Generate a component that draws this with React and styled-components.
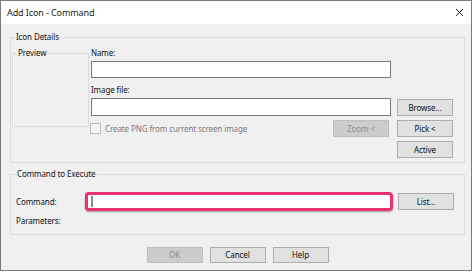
import React from "react";
import styled, { createGlobalStyle } from "styled-components";

const GlobalStyle = createGlobalStyle`
  html, body {
    margin: 0;
    padding: 0;
    background: #ffffff;
  }
  body {
    font-family: "Noto Sans", "Open Sans", sans-serif;
    font-size: 8px;
    letter-spacing: -0.1px;
    color: #000;
  }
`;

export default function App() {
  return (
    <>
      <GlobalStyle />
      <Window>
        <TitleBar>
          <Title>Add Icon - Command</Title>
          <CloseIcon viewBox="0 0 10 10" aria-label="Close">
            <path d="M1 1 L9 9 M9 1 L1 9" />
          </CloseIcon>
        </TitleBar>
        <Body>
          <IconDetails>
            <Legend>Icon Details</Legend>
            <DetailsGrid>
              <Preview>
                <Legend $inset={4}>Preview</Legend>
              </Preview>
              <Label $row={1} $col={2}>Name:</Label>
              <TextBox $row={2} />
              <Label $row={3} $col={2} $end>
                Image file:
              </Label>
              <TextBox $row={4} $tall />
              <Button $row={4} $col={3}>
                Browse...
              </Button>
              <CheckRow>
                <CheckLabel>
                  <CheckBox />
                  Create PNG from current screen image
                </CheckLabel>
                <Button disabled>Zoom &lt;</Button>
              </CheckRow>
              <Button $row={5} $col={3}>
                Pick &lt;
              </Button>
              <Button $row={6} $col={3}>
                Active
              </Button>
            </DetailsGrid>
          </IconDetails>

          <CommandBox>
            <Legend $inset={0}>Command to Execute</Legend>
            <CommandGrid>
              <Label>Command:</Label>
              <HighlightField>
                <Caret />
              </HighlightField>
              <Button>List...</Button>
              <Label>Parameters:</Label>
            </CommandGrid>
          </CommandBox>

          <Footer>
            <Button disabled>OK</Button>
            <Button>Cancel</Button>
            <Button>Help</Button>
          </Footer>
        </Body>
      </Window>
    </>
  );
}

const Window = styled.div`
  width: 470px;
  height: 269px;
  border: 1px solid #7c7c7c;
  background: #f0f0f0;
  display: flex;
  flex-direction: column;
`;

const TitleBar = styled.div`
  height: 23px;
  background: #ffffff;
  display: flex;
  align-items: center;
  justify-content: space-between;
  padding: 0 7px 0 6px;
`;

const Title = styled.span`
  font-size: 9px;
  color: #1a1a1a;
`;

const CloseIcon = styled.svg`
  width: 9px;
  height: 9px;
  fill: none;
  stroke: #222;
  stroke-width: 1.1;
`;

const Body = styled.div`
  flex: 1;
  padding: 6px 6px 0 9px;
  display: flex;
  flex-direction: column;
`;

const Fieldset = styled.fieldset`
  margin: 0;
  border: 1px solid #dcdcdc;
  min-width: 0;
`;

const Legend = styled.legend`
  margin-left: ${(p) => p.$inset ?? 3}px;
  padding: 0 1px;
  line-height: 14px;
  font-size: 8px;
  color: #111;
`;

const IconDetails = styled(Fieldset)`
  padding: 0 9px 4px 1px;
`;

const DetailsGrid = styled.div`
  display: grid;
  grid-template-columns: 79px 306px 57px;
  grid-template-rows: 17px 17px 20px 18px 21px 21px;
`;

const Preview = styled(Fieldset)`
  grid-row: 1 / span 6;
  grid-column: 1;
  align-self: start;
  width: 77px;
  height: 81px;
  box-sizing: border-box;
  margin-top: 2px;
  padding: 0;
`;

const Label = styled.span`
  grid-row: ${(p) => p.$row ?? "auto"};
  grid-column: ${(p) => p.$col ?? "auto"};
  align-self: ${(p) => (p.$end ? "end" : "center")};
  margin-bottom: ${(p) => (p.$end ? 1 : 0)}px;
  line-height: 14px;
  color: #111;
`;

const TextBox = styled.div`
  grid-row: ${(p) => p.$row};
  grid-column: 2;
  align-self: start;
  width: 300px;
  height: ${(p) => (p.$tall ? 18 : 17)}px;
  box-sizing: border-box;
  background: #ffffff;
  border: 1px solid #7a7a7a;
`;

const Button = styled.button`
  grid-row: ${(p) => p.$row ?? "auto"};
  grid-column: ${(p) => p.$col ?? "auto"};
  align-self: ${(p) => (p.$row ? "end" : "center")};
  width: 56px;
  height: 17px;
  box-sizing: border-box;
  padding: 0;
  margin: 0;
  font-family: inherit;
  font-size: 8px;
  letter-spacing: -0.1px;
  line-height: 15px;
  color: #111;
  background: #e1e1e1;
  border: 1px solid #adadad;
  border-radius: 0;

  &:disabled {
    background: #cccccc;
    border-color: #bfbfbf;
    color: #8d8d8d;
  }
`;

const CheckRow = styled.div`
  grid-row: 5;
  grid-column: 2;
  align-self: end;
  width: 298px;
  display: flex;
  align-items: center;
  justify-content: space-between;
`;

const CheckLabel = styled.label`
  display: flex;
  align-items: center;
  gap: 4px;
  color: #7a7a7a;
  line-height: 14px;
`;

const CheckBox = styled.span`
  width: 11px;
  height: 11px;
  box-sizing: border-box;
  border: 1px solid #bcbcbc;
  background: #f4f4f4;
  margin-left: -1px;
`;

const CommandBox = styled(Fieldset)`
  margin-top: 4px;
  padding: 11px 10px 6px 5px;
`;

const CommandGrid = styled.div`
  display: grid;
  grid-template-columns: 69px 313px 56px;
  grid-template-rows: 19px 14px;
  row-gap: 3px;
`;

const HighlightField = styled.div`
  width: 308px;
  height: 19px;
  box-sizing: border-box;
  background: #ffffff;
  border: 3px solid #e8336d;
  border-radius: 4px;
  box-shadow: 0 1px 2px rgba(0, 0, 0, 0.35);
  display: flex;
  align-items: center;
  padding-left: 3px;
`;

const Caret = styled.span`
  width: 2px;
  height: 11px;
  background: #8a8a8a;
`;

const Footer = styled.div`
  display: flex;
  justify-content: center;
  gap: 7px;
  padding: 12px 0 0 0;

  & > ${Button} {
    height: 16px;
    line-height: 14px;
  }
`;
